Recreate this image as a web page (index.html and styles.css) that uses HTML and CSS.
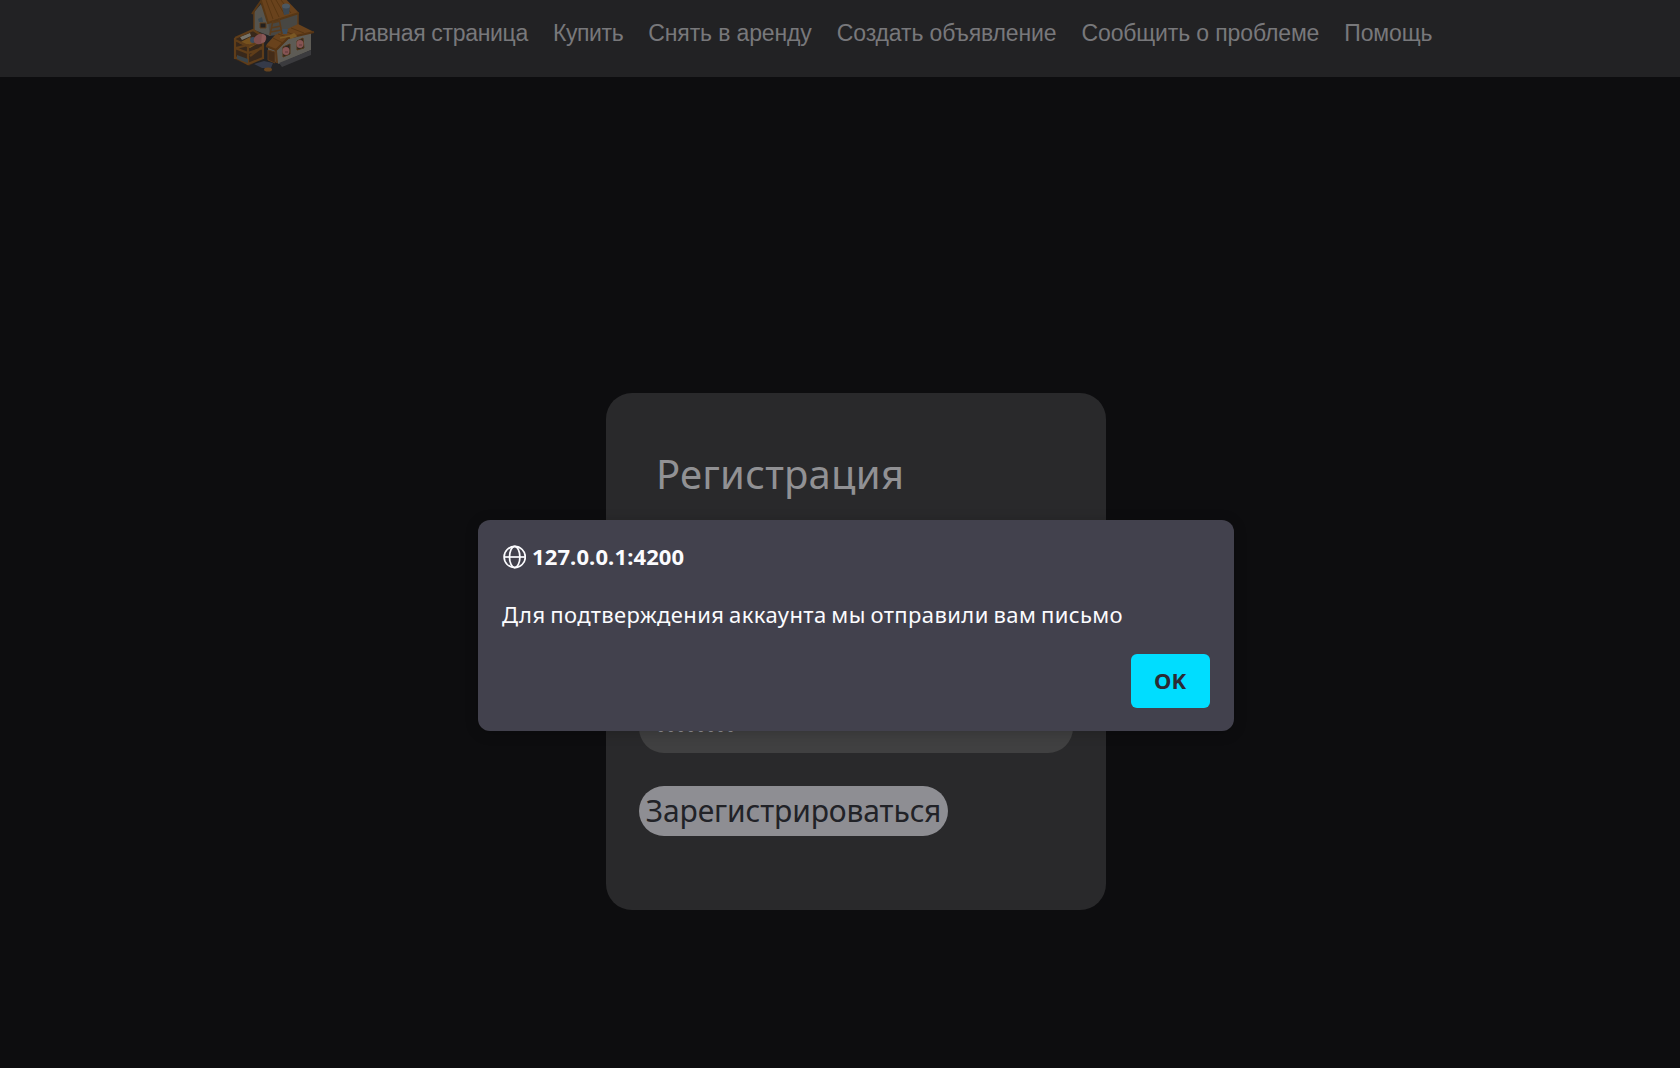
FILE: index.html
```html
<!DOCTYPE html>
<html lang="ru">
<head>
<meta charset="utf-8">
<title>Регистрация</title>
<link rel="stylesheet" href="styles.css">
</head>
<body>
<header class="navbar">
  <a class="brand" href="#" aria-label="Ферма">
    <svg width="82" height="74" viewBox="0 0 82 74">
      <!-- upper storey -->
      <path d="M21 12 28 4 37 20 37 36 21 30z" fill="#55544f"/>
      <path d="M35 22 65 12 65 26 50 34 37 36z" fill="#484743"/>
      <path d="M21 12v18M65 13v12" stroke="#5e3d1a" stroke-width="1.5"/>
      <path d="M28 0 50 -4 66 13 35 22z" fill="#69421c"/>
      <path d="M19 14 28 1 35 23 66 13" fill="none" stroke="#573715" stroke-width="2"/>
      <path d="M33 0 40 19M38 0 46 17M43 0 52 15M48 0 58 13" stroke="#573613" stroke-width="1"/>
      <path d="M27 23h6v5h-6z" fill="#22201f" stroke="#5e3d1a"/>
      <path d="M25 19 29 17 30 22 26 22z" fill="#3b4850"/>
      <!-- barn roof and wall -->
      <path d="M41 49 56 38 78 32 78 50 46 64 35 57 35 47z" fill="#5d5b55"/>
      <path d="M46 63 78 50 78 55 49 67z" fill="#3b3b3e"/>
      <path d="M34 44 42 35 65 24 81 32 56 38 43 51 33 46z" fill="#69421c"/>
      <path d="M33 46 43 50 55 38 81 32" fill="none" stroke="#553414" stroke-width="2"/>
      <path d="M40 38 50 43M45 34 57 38M51 31 64 36M58 28 71 33" stroke="#553513" stroke-width="1"/>
      <path d="M40 20 37 35M46 18 49 34M39 23 47 21M38 28 48 26M38 32 48 30" stroke="#5a3a1a" stroke-width="1.5" fill="none"/>
      <path d="M35 50 42 52 42 63 35 60z" fill="#442c18" stroke="#5a391a"/>
      <path d="M43 51 44 63" stroke="#5a391a" stroke-width="2"/>
      <path d="M50 47 57 44 57 54 50 57z" fill="#292522" stroke="#523719"/>
      <path d="M64 41 70 38 71 48 64 50z" fill="#292522" stroke="#523719"/>
      <ellipse cx="53" cy="51" rx="3.5" ry="4" fill="#865453"/>
      <ellipse cx="67" cy="44" rx="3.5" ry="4" fill="#865453"/>
      <path d="M52 52h3M66 45h3" stroke="#5c3738"/>
      <!-- pen -->
      <path d="M1 38 20 30 30 36 30 58 16 66 1 59z" fill="#38281b"/>
      <path d="M6 43 17 37 24 44 17 48z" fill="#76511e"/>
      <path d="M7 37 17 33 18 36 9 40z" fill="#77746a"/>
      <circle cx="20" cy="40" r="3" fill="#3c4a5c"/>
      <path d="M2 38v21M15 44v21M30 40v19M2 40 15 46 30 41M2 48 15 53 30 48M2 57 15 64 30 58M3 48 15 45M17 56 29 47M2 38 20 30 30 36" stroke="#5f3d19" stroke-width="2.2" fill="none"/>
      <path d="M4 55 15 59v4L4 59z" fill="#3a4348"/>
      <ellipse cx="27" cy="39" rx="6.5" ry="5" transform="rotate(-25 27 39)" fill="#7c4d4d"/>
      <path d="M29 34 33 36 32 42 28 43z" fill="#8b5957"/>
      <!-- buckets, shovel, puddle -->
      <path d="M49 6 57 6 56 14 51 15z" fill="#3b4650"/>
      <ellipse cx="53" cy="6" rx="4" ry="2.5" fill="#4c5760"/>
      <path d="M49 29h6l-1 5h-4z" fill="#3c4c5c"/>
      <path d="M47 38 57 36M57 36l4-2 2 2-5 2z" stroke="#7a5824" stroke-width="1.5" fill="#7a5824"/>
      <path d="M21 64 31 61 40 63 38 68 29 68z" fill="#353a49"/>
      <ellipse cx="35" cy="69.5" rx="4" ry="2" fill="#67441f"/>
    </svg>
  </a>
  <nav class="links">
    <a href="#">Главная страница</a>
    <a href="#">Купить</a>
    <a href="#">Снять в аренду</a>
    <a href="#">Создать объявление</a>
    <a href="#">Сообщить о проблеме</a>
    <a href="#">Помощь</a>
  </nav>
</header>
<main class="page">
  <form class="card">
    <h1 class="title">Регистрация</h1>
    <input class="field" type="email" aria-label="Почта">
    <input class="field" type="password" value="12345678" aria-label="Пароль">
    <button class="submit" type="button">Зарегистрироваться</button>
  </form>
</main>
<section class="dialog" role="alertdialog">
  <div class="origin">
    <svg class="globe" width="24" height="26" viewBox="0 0 24 26" fill="none" stroke="#fbfbfe" stroke-width="1.7">
      <circle cx="12.7" cy="14" r="10.6"/>
      <ellipse cx="12.7" cy="14" rx="5.2" ry="10.6"/>
      <path d="M2 14h21.4"/>
    </svg>
    <span>127.0.0.1:4200</span>
  </div>
  <p class="message">Для подтверждения аккаунта мы отправили вам письмо</p>
  <button class="ok" type="button">OK</button>
</section>
</body>
</html>
```
FILE: styles.css
```css
* { box-sizing: border-box; }
body {
  margin: 0;
  height: 1068px;
  overflow: hidden;
  background: #0d0d0f;
  font-family: "Noto Sans", sans-serif;
  display: flex;
  flex-direction: column;
}
.navbar {
  height: 77px;
  flex: none;
  padding-left: 233px;
  background: #222224;
  display: flex;
}
.brand { width: 107px; height: 77px; overflow: hidden; }
.brand svg { display: block; }
.links {
  display: flex;
  gap: 25px;
  padding-top: 19px;
}
.links a {
  font: 23px/28px "Liberation Sans", Arial, sans-serif;
  letter-spacing: -.13px;
  color: #78787b;
  text-decoration: none;
  white-space: nowrap;
}
.links a:nth-child(1) { letter-spacing: -.32px; }
.links a:nth-child(2) { letter-spacing: -.4px; }
.page {
  flex: 1;
  padding: 316px 0 0 606px;
}
.card {
  width: 500px;
  height: 517px;
  padding: 51px 33px 0;
  border-radius: 26px;
  background: #29292b;
  display: flex;
  flex-direction: column;
  align-items: flex-start;
}
.title {
  margin: 0 0 113px 17px;
  color: #919194;
  font-size: 40px;
  line-height: 60px;
  font-weight: 400;
  letter-spacing: .25px;
}
.field {
  width: 434px;
  height: 50px;
  margin: 0 0 36px;
  padding: 0 17px;
  border: 0;
  border-radius: 25px;
  background: #404041;
  color: #919194;
  font: 26px "Noto Sans", sans-serif;
  letter-spacing: .2px;
}
.field + .field { margin-bottom: 33px; }
.submit {
  height: 50px;
  width: 309px;
  padding: 0;
  border: 0;
  border-radius: 25px;
  background: #8e8e93;
  color: #212227;
  font: 30px/50px "Noto Sans", sans-serif;
  letter-spacing: -.12px;
  white-space: nowrap;
}
.dialog {
  position: absolute;
  left: 478px;
  top: 520px;
  width: 756px;
  height: 211px;
  padding: 23px 24px;
  border-radius: 12px;
  background: #42414d;
  color: #fbfbfe;
  box-shadow: 0 2px 14px rgba(0, 0, 0, .2);
  display: flex;
  flex-direction: column;
}
.origin {
  display: flex;
  align-items: center;
  gap: 6px;
  height: 26px;
  font-size: 22px;
  font-weight: 700;
  letter-spacing: .12px;
}
.message {
  margin: 30px 0 25px;
  font-size: 22px;
  line-height: 30px;
  letter-spacing: .4px;
  word-spacing: -1.4px;
  white-space: nowrap;
}
.ok {
  flex: none;
  align-self: flex-end;
  width: 79px;
  height: 54px;
  padding: 0 1px 2px 0;
  border: 0;
  border-radius: 6px;
  background: #00ddff;
  color: #2b2a33;
  font: 700 22px "Noto Sans", sans-serif;
}
```
